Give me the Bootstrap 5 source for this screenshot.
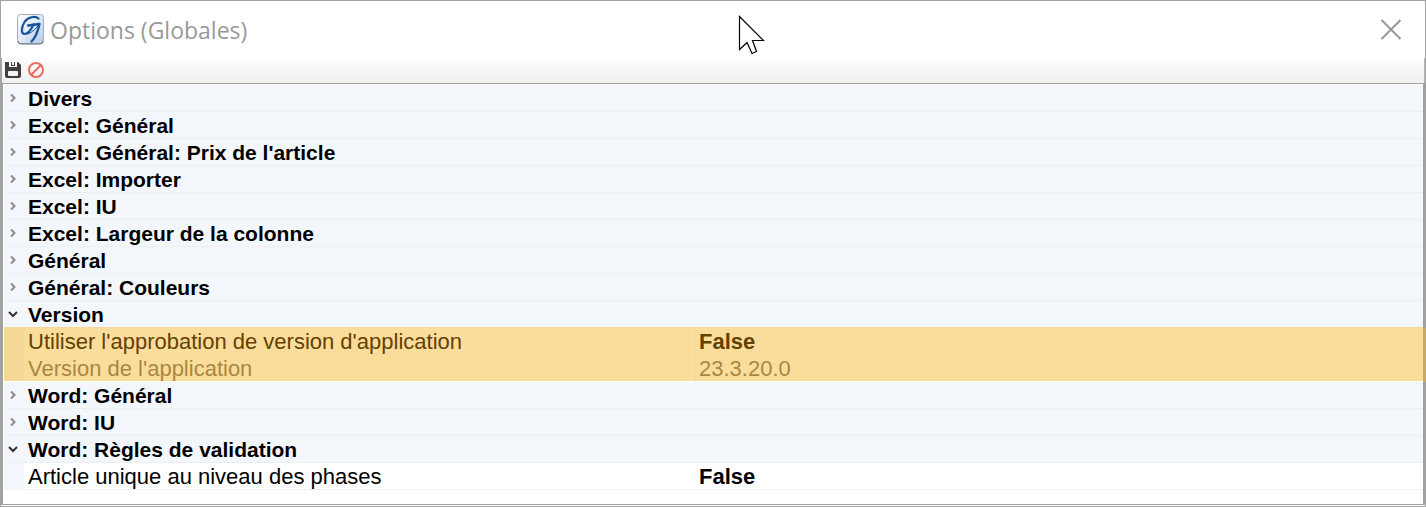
<!DOCTYPE html>
<html lang="fr">
<head>
<meta charset="utf-8">
<meta name="viewport" content="width=device-width, initial-scale=1">
<title>Options (Globales)</title>
<link href="https://cdn.jsdelivr.net/npm/bootstrap@5.3.0/dist/css/bootstrap.min.css" rel="stylesheet">
<style>
body { font-family: "Liberation Sans", Arial, sans-serif; color: #000; background: #fff; }
.window { border: 1px solid #a3a3a3; min-height: 100vh; }
.titlebar { height: 57px; padding: 0 23px 0 15px; }
.window-title { font: 400 23px/32px "Open Sans", "Noto Sans", sans-serif; color: #999; }
.plain { border: 0; background: none; padding: 0; color: inherit; font: inherit; display: block; }
.plain svg { display: block; }
.tools { height: 25px; padding: 0 0 2px 2px; gap: 4px; border-left: 1px solid #a3a3a3; border-right: 1px solid #b5b5b5; background: linear-gradient(#fdfdfd, #f0f0f0); }
.sheet { border: solid #a0a0a0; border-width: 1px 2px 1px 2px; padding: 1px 0 0 1px; margin-bottom: 1px; }
.props { width: 100%; table-layout: fixed; border-collapse: separate; border-spacing: 0; font-size: 22px; line-height: 24px; }
.props td, .props th { height: 27px; padding: 2px 0 0; border-bottom: 1px solid #eceff2; white-space: nowrap; }
.c-gutter { width: 20px; }
.c-name { width: 672px; }
.props .cat th { background: #f3f7fc; font-size: 21px; font-weight: 700; }
.props .cat:has(+ .marked) th { border-bottom-color: #f6d897; }
.toggle { display: flex; align-items: center; width: 100%; text-align: left; }
.toggle svg { width: 18px; height: 10px; margin: 0 6px 2px 0; flex: none; }
.props .prop td:first-child { background: #f3f7fc; border-color: #f3f7fc; }
.props .prop th { font-weight: 400; padding-left: 4px; }
.props .prop td:last-child { padding-left: 3px; }
.props .marked > * { background: #fbdd9b; border-bottom-color: #f6d897; color: #644100; }
.props .marked th { border-right: 1px solid #f6d897; }
.props .marked td:first-child { background: #f5d797; border-color: #f5d797; }
.props .marked td:last-child { box-shadow: 3px 0 #c9a966; }
.props .readonly > *, .props .readonly td:first-child { color: #a98743; border-bottom-color: #fff; }
.pointer { position: absolute; left: 738px; top: 15px; }
</style>
</head>
<body>
<main class="window d-flex flex-column">
  <header class="titlebar d-flex align-items-center">
    <svg width="30" height="34" viewBox="0 0 30 34" aria-hidden="true">
      <defs><linearGradient id="tile" x2="1" y2="1"><stop stop-color="#fff"/><stop offset=".5" stop-color="#dfe8f5"/><stop offset="1" stop-color="#b5c8e2"/></linearGradient></defs>
      <rect x="1.500" y="1.500" width="26" height="29" rx="3" fill="url(#tile)" stroke="#a3acb9"/>
      <path d="M2 28q0 3 3 3h19q3 0 3-3" fill="none" stroke="#69727f"/>
      <g fill="none" stroke="#17549b" stroke-linecap="round" stroke-linejoin="round">
        <path d="M22.500 5.500C19 2.500 12 4 8.500 9C5 14.500 5 21 8.500 21C12 21 15 17 17.500 11.500" stroke-width="2.200"/>
        <path d="M12 12.500L23.500 11C22 18 20 24 15.500 28.500" stroke-width="2.300"/>
        <path d="M23 11Q19 18 12 21" stroke-width="1"/>
      </g>
    </svg>
    <h1 class="window-title mb-0 ms-1 ps-0 flex-grow-1">Options (Globales)</h1>
    <button class="plain" type="button" aria-label="Fermer"><svg width="22" height="22" viewBox="0 0 22 22"><path d="M1.500 1l19 19M20.500 1l-19 19" stroke="#999" stroke-width="2"/></svg></button>
  </header>
  <div class="tools d-flex align-items-center" role="toolbar" aria-label="Actions">
    <button class="plain" type="button" aria-label="Enregistrer"><svg width="18" height="18" viewBox="0 0 18 18"><path fill="#404040" fill-rule="evenodd" d="M1 1h4v5h8V1h1l3 3v11q0 2-2 2H3q-2 0-2-2zM7 1h1v3h2V1h1v4H7zM5 10q-1 0-1 1v3q0 1 1 1h8q1 0 1-1v-3q0-1-1-1z"/></svg></button>
    <button class="plain" type="button" aria-label="Annuler"><svg width="20" height="18" viewBox="0 0 20 18"><g fill="none" stroke="#ec6b60" stroke-width="2"><circle cx="10" cy="9" r="7"/><path d="M5 14L15 4"/></g></svg></button>
  </div>
  <section class="sheet flex-grow-1">
    <table class="props">
      <colgroup><col class="c-gutter"><col class="c-name"><col></colgroup>
      <tbody id="rows"></tbody>
    </table>
  </section>
</main>
<svg class="pointer" width="28" height="42" viewBox="0 0 28 42" aria-hidden="true"><path d="M1.500 1.500V34.500L9 27.500L14 38.500L18.500 36.500L14.500 25.500H25.500Z" fill="#fff" stroke="#000" stroke-width="1.200"/></svg>
<script>
const groups = [
  ["Divers"], ["Excel: Général"], ["Excel: Général: Prix de l'article"], ["Excel: Importer"],
  ["Excel: IU"], ["Excel: Largeur de la colonne"], ["Général"], ["Général: Couleurs"],
  ["Version", [["Utiliser l'approbation de version d'application", "False", "marked"],
               ["Version de l'application", "23.3.20.0", "marked readonly"]]],
  ["Word: Général"], ["Word: IU"],
  ["Word: Règles de validation", [["Article unique au niveau des phases", "False", ""]]]
];
const closed = '<path d="M7 1.500L10.500 5L7 8.500" fill="none" stroke="#8c8c8c" stroke-width="2"/>';
const opened = '<path d="M5 3L9 7L13 3" fill="none" stroke="#333" stroke-width="2"/>';
document.getElementById("rows").innerHTML = groups.map(([name, props]) =>
  `<tr class="cat"><th colspan="3" scope="rowgroup"><button class="plain toggle" type="button" aria-expanded="${!!props}"><svg viewBox="0 0 18 10" aria-hidden="true">${props ? opened : closed}</svg>${name}</button></th></tr>` +
  (props || []).map(([label, value, cls]) =>
    `<tr class="prop ${cls}"><td></td><th scope="row">${label}</th><td class="${cls.includes("readonly") ? "" : "fw-bold"}">${value}</td></tr>`).join("")
).join("");
</script>
<script src="https://cdn.jsdelivr.net/npm/bootstrap@5.3.0/dist/js/bootstrap.bundle.min.js"></script>
</body>
</html>
